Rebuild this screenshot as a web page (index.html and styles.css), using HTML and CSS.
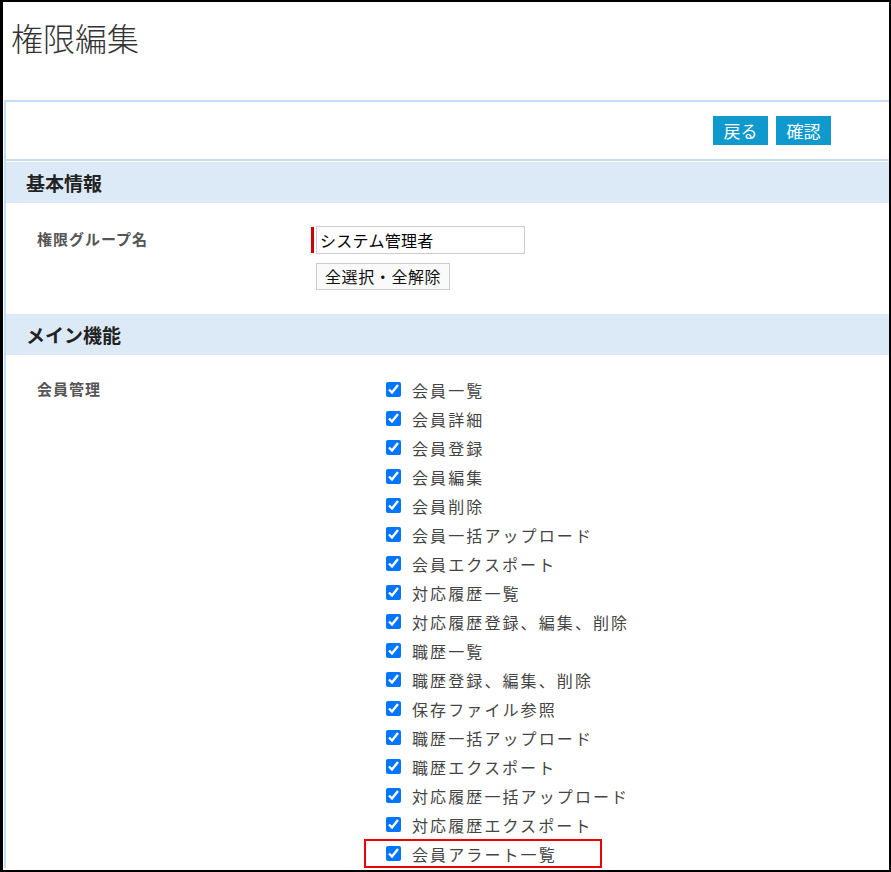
FILE: index.html
```html
<!DOCTYPE html>
<html lang="ja">
<head>
    <meta charset="UTF-8">
    <meta name="viewport" content="width=device-width, initial-scale=1.0">
    <title>権限編集</title>
    <link rel="stylesheet" href="styles.css">
</head>
<body>
  <div class="page">
    <h1 class="page-title">権限編集</h1>

    <div class="panel">
      <div class="toolbar">
        <button type="button" class="btn-blue">戻る</button>
        <button type="button" class="btn-blue">確認</button>
      </div>

      <!-- 基本情報 -->
      <h2 class="section-head">基本情報</h2>
      <div class="form-row first-row">
        <div class="row-label">権限グループ名</div>
        <div class="row-control">
          <div class="required">
            <input type="text" class="name-input" value="システム管理者">
          </div>
          <button type="button" class="btn-plain">全選択・全解除</button>
        </div>
      </div>

      <!-- メイン機能 -->
      <h2 class="section-head">メイン機能</h2>
      <div class="form-row">
        <div class="row-label check-label">会員管理</div>
        <ul class="check-list">
          <li><input type="checkbox" checked> 会員一覧</li>
          <li><input type="checkbox" checked> 会員詳細</li>
          <li><input type="checkbox" checked> 会員登録</li>
          <li><input type="checkbox" checked> 会員編集</li>
          <li><input type="checkbox" checked> 会員削除</li>
          <li><input type="checkbox" checked> 会員一括アップロード</li>
          <li><input type="checkbox" checked> 会員エクスポート</li>
          <li><input type="checkbox" checked> 対応履歴一覧</li>
          <li><input type="checkbox" checked> 対応履歴登録、編集、削除</li>
          <li><input type="checkbox" checked> 職歴一覧</li>
          <li><input type="checkbox" checked> 職歴登録、編集、削除</li>
          <li><input type="checkbox" checked> 保存ファイル参照</li>
          <li><input type="checkbox" checked> 職歴一括アップロード</li>
          <li><input type="checkbox" checked> 職歴エクスポート</li>
          <li><input type="checkbox" checked> 対応履歴一括アップロード</li>
          <li><input type="checkbox" checked> 対応履歴エクスポート</li>
          <li class="marked"><input type="checkbox" checked> 会員アラート一覧</li>
        </ul>
      </div>
    </div>
  </div>
</body>
</html>
```

FILE: styles.css
```css
body {
  margin: 0;
  font-family: "Noto Sans CJK JP", "Noto Sans", sans-serif;
  color: #444;
}

.page {
  width: 891px;
  height: 872px;
  box-sizing: border-box;
  border: 2px solid #000;
  border-left-width: 3px;
  overflow: hidden;
  background: #fff;
}

.page-title {
  margin: 19px 0 0 8px;
  font-size: 32px;
  line-height: 32px;
  font-weight: 300;
  color: #333;
}

/* main panel */
.panel {
  margin: 47px 0 0 1px;
  border: 2px solid #c6dcf5;
  border-right: none;
  border-bottom: none;
}

.toolbar {
  display: flex;
  justify-content: flex-end;
  gap: 8px;
  padding: 14px 58px 14px 0;
  border-bottom: 2px solid #c6dcf5;
}

.btn-blue {
  width: 55px;
  height: 29px;
  padding: 0;
  border: none;
  background-color: #0f99cd;
  color: #fff;
  font-family: inherit;
  font-size: 17px;
  line-height: 29px;
  cursor: pointer;
}

.section-head {
  margin: 1px 0 0;
  padding: 0 20px;
  height: 41px;
  line-height: 41px;
  background-color: #dce9f7;
  font-size: 19px;
  font-weight: bold;
  color: #222;
}

.form-row {
  display: grid;
  grid-template-columns: 279px 1fr;
  padding: 20px 0 0 31px;
}

.form-row.first-row {
  padding: 23px 0 23px 31px;
}

.row-label {
  font-size: 15px;
  letter-spacing: 1px;
  font-weight: bold;
  color: #555;
  line-height: 26px;
}

.check-label {
  line-height: 28px;
}

.row-control {
  display: flex;
  flex-direction: column;
  align-items: flex-start;
  gap: 9px;
}

.required {
  position: relative;
}

.required::before {
  content: "";
  position: absolute;
  left: -5px;
  top: 1px;
  width: 3px;
  height: 26px;
  background: #c00;
}

.name-input {
  display: block;
  width: 209px;
  height: 28px;
  box-sizing: border-box;
  border: 1px solid #ccc;
  padding: 0 3px;
  font-family: inherit;
  font-size: 16px;
  letter-spacing: 0.3px;
  color: #000;
}

.btn-plain {
  height: 27px;
  padding: 0 8px;
  border: 1px solid #ccc;
  background: #fafafa;
  font-family: inherit;
  font-size: 16px;
  letter-spacing: 0.6px;
  color: #111;
  line-height: 25px;
}

/* checkbox list */
.check-list {
  list-style: none;
  margin: 0;
  padding: 0 0 0 70px;
}

.check-list li {
  position: relative;
  display: flex;
  align-items: center;
  height: 29px;
  font-size: 16px;
  letter-spacing: 2.1px;
  color: #444;
}

.check-list input {
  width: 15px;
  height: 15px;
  margin: 0 11px 0 0;
  accent-color: #0075ff;
}

.check-list li.marked::after {
  content: "";
  position: absolute;
  left: -22px;
  top: 0;
  width: 238px;
  height: 29px;
  box-sizing: border-box;
  border: 2px solid #ee0000;
}
```
